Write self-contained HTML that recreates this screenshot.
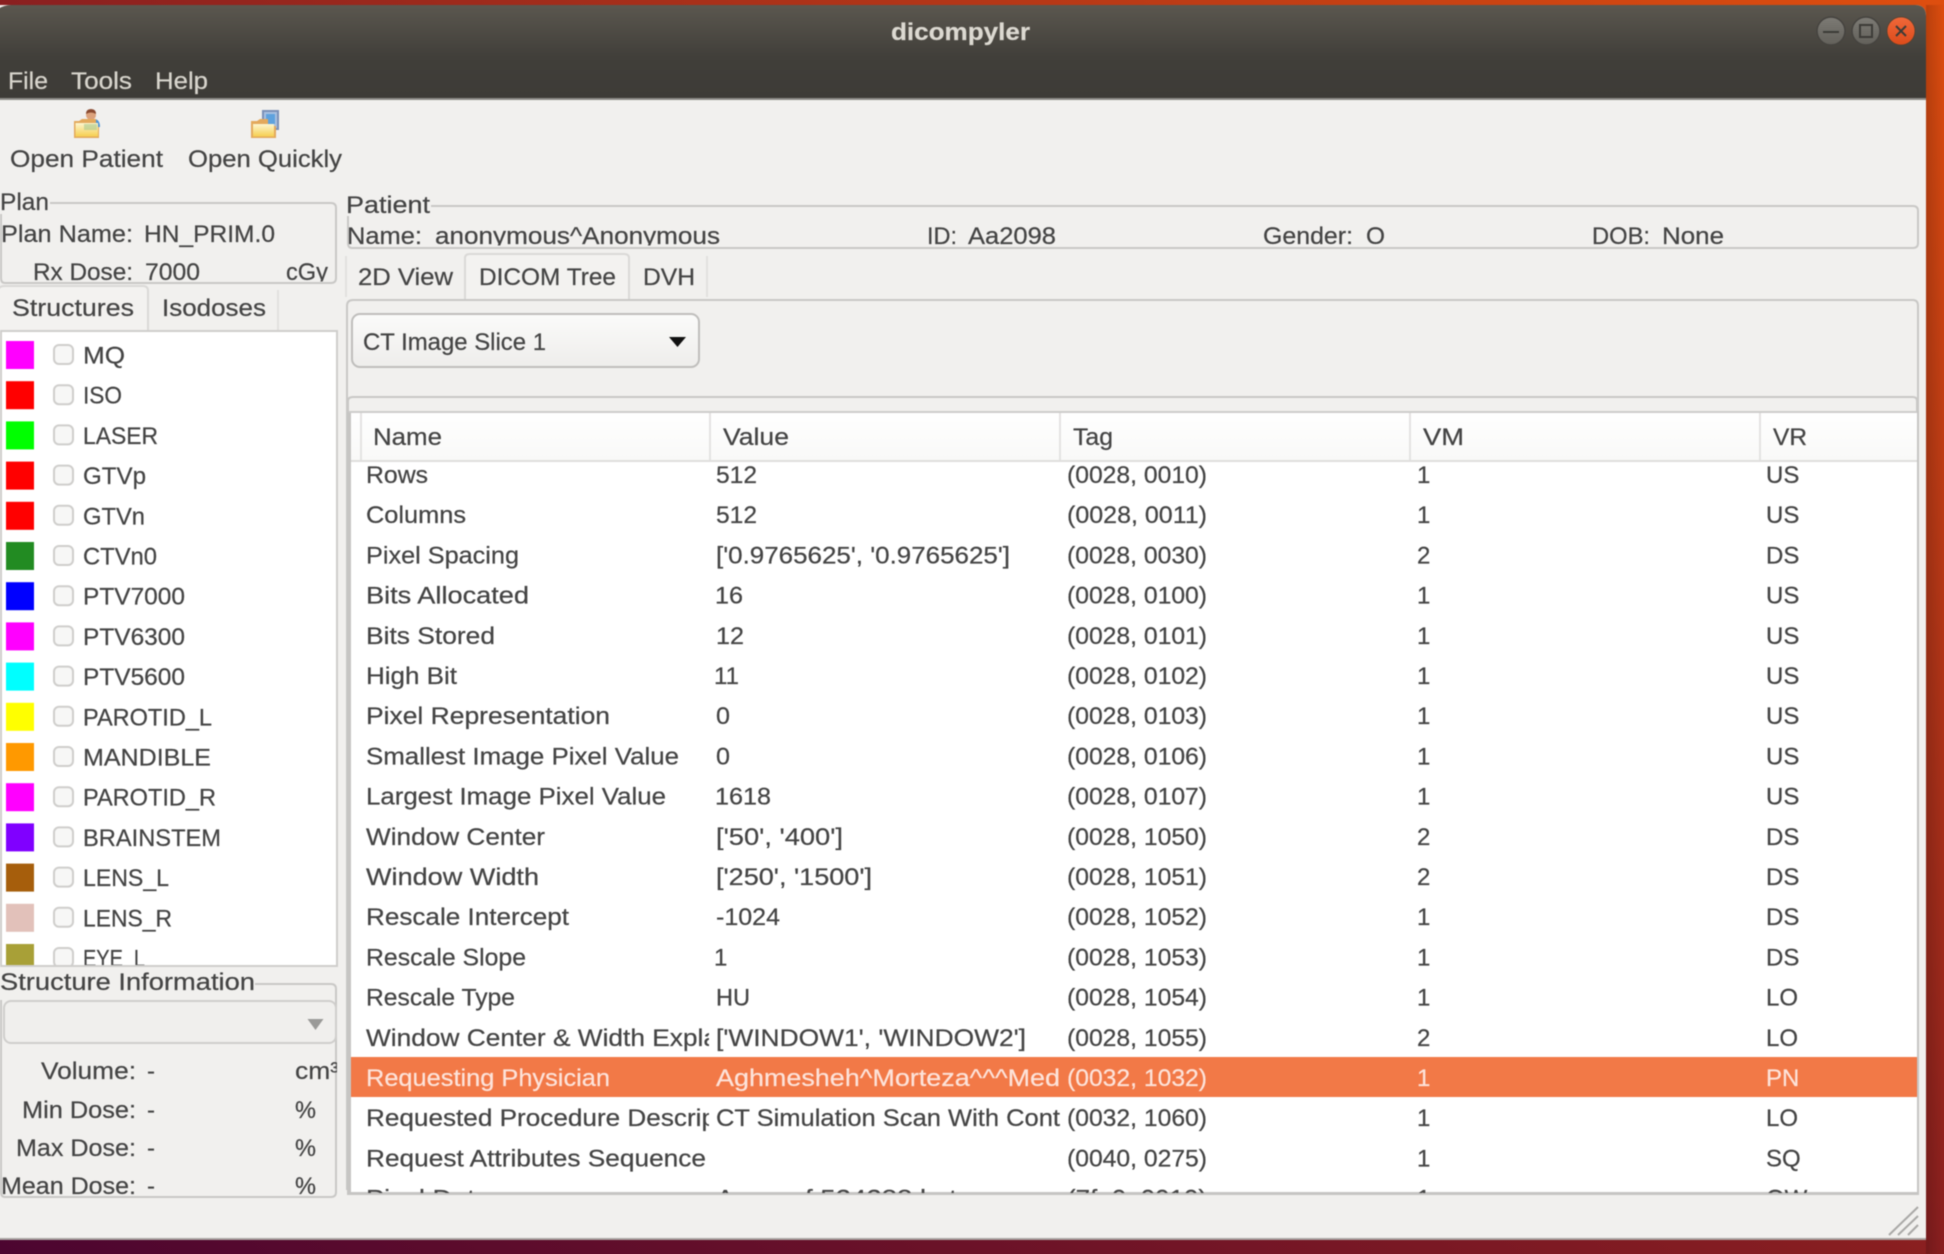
<!DOCTYPE html>
<html>
<head>
<meta charset="utf-8">
<title>dicompyler</title>
<style>
html,body{margin:0;padding:0;width:1944px;height:1254px;overflow:hidden;background:#8a1f20;}
#w{position:absolute;left:0;top:0;width:1944px;height:1254px;overflow:hidden;background:linear-gradient(to top right,#4c0530 0%,#8a1f20 50%,#de4e0f 100%);}
svg{position:absolute;left:-10px;top:-10px;filter:blur(.55px);}
text{font-family:"Liberation Sans",sans-serif;font-size:24px;color:#444;fill:currentColor;stroke:currentColor;stroke-width:.22;}
.m{color:#d8d5cd;}
.s{color:#fde3da;}
.ln{fill:none;stroke:#c9c8c6;stroke-width:2;}
.cb{fill:#f7f7f6;stroke:#cfcecc;stroke-width:2;}
</style>
</head>
<body>
<div id="w">
<svg width="1964" height="1274" viewBox="-10 -10 1964 1274" xmlns="http://www.w3.org/2000/svg">
<defs>
<linearGradient id="tb" x1="0" y1="0" x2="0" y2="1"><stop offset="0" stop-color="#5b574f"/><stop offset=".55" stop-color="#413f3a"/><stop offset="1" stop-color="#3d3b37"/></linearGradient>
<linearGradient id="bt" x1="0" y1="0" x2="0" y2="1"><stop offset="0" stop-color="#fbfbfa"/><stop offset="1" stop-color="#eeedeb"/></linearGradient>
<linearGradient id="hd" x1="0" y1="0" x2="0" y2="1"><stop offset="0" stop-color="#fff"/><stop offset="1" stop-color="#f9f9f8"/></linearGradient>
<linearGradient id="wb" x1="0" y1="0" x2="0" y2="1"><stop offset="0" stop-color="#7d7b75"/><stop offset="1" stop-color="#62605a"/></linearGradient>
<linearGradient id="cl" x1="0" y1="0" x2="0" y2="1"><stop offset="0" stop-color="#f0683a"/><stop offset="1" stop-color="#dc4b1a"/></linearGradient>
<linearGradient id="fd" x1="0" y1="0" x2="0" y2="1"><stop offset="0" stop-color="#fdf6d0"/><stop offset="1" stop-color="#f6cf50"/></linearGradient>
<linearGradient id="shr" x1="0" y1="0" x2="1" y2="0"><stop offset="0" stop-color="#000" stop-opacity=".16"/><stop offset="1" stop-color="#000" stop-opacity="0"/></linearGradient>
<clipPath id="cPlan"><rect x="-10" y="200" width="347" height="81.500"/></clipPath>
<clipPath id="cPat"><rect x="340" y="200" width="1580" height="45.500"/></clipPath>
<clipPath id="cList"><rect x="-10" y="332" width="347" height="633"/></clipPath>
<clipPath id="cInfo"><rect x="-10" y="1046" width="347" height="151"/></clipPath>
<clipPath id="cName"><rect x="351" y="462" width="358" height="731"/></clipPath>
<clipPath id="cVal"><rect x="711" y="462" width="349" height="731"/></clipPath>
<clipPath id="cRest"><rect x="1060" y="462" width="857" height="731"/></clipPath>
</defs>

<!-- window shadow on desktop -->
<rect x="1926" y="5" width="18" height="1249" fill="url(#shr)"/>

<!-- window -->
<path d="M-10 16V5H-10Q0 5 11 5H1915Q1926 5 1926 16V1239H-10Z" fill="#f1f0ee"/>
<path d="M-10 99V16Q0 5 11 5H1915Q1926 5 1926 16V99Z" fill="url(#tb)"/>
<rect x="-10" y="98" width="1936" height="2" fill="#8d8c88"/>
<rect x="-10" y="1238" width="1936" height="2" fill="#a9a5a2"/>

<text x="891" y="40" textLength="139" lengthAdjust="spacingAndGlyphs" style="color:#dcd9d1;font-weight:bold">dicompyler</text>
<circle cx="1831" cy="31" r="14" fill="url(#wb)" stroke="#45433f" stroke-width="1.5"/>
<path d="M1823 32H1839" stroke="#3c3b37" stroke-width="2"/>
<circle cx="1866" cy="31" r="14" fill="url(#wb)" stroke="#45433f" stroke-width="1.5"/>
<rect x="1860" y="25" width="12" height="12" fill="none" stroke="#3c3b37" stroke-width="2"/>
<circle cx="1901" cy="31" r="14" fill="url(#cl)" stroke="#55402f" stroke-width=".8"/>
<path d="M1896 26L1906 36M1906 26L1896 36" stroke="#3c3b37" stroke-width="2"/>

<text class="m" x="8" y="89" textLength="40" lengthAdjust="spacingAndGlyphs">File</text>
<text class="m" x="71" y="89" textLength="61" lengthAdjust="spacingAndGlyphs">Tools</text>
<text class="m" x="155" y="89" textLength="53" lengthAdjust="spacingAndGlyphs">Help</text>

<!-- toolbar icons -->
<g>
<circle cx="91" cy="115" r="5" fill="#dca27c"/><path d="M86 114Q86 109 91 109Q96 109 96 114Q91 111 86 114Z" fill="#8a4a30"/>
<path d="M80 127Q81 120 87 119H95Q100 120 100 127Z" fill="#4f93d6"/>
<path d="M74 121H79L82 119H96V127H99V138H74Z" fill="#e3a95c"/>
<rect x="75.500" y="123" width="22.500" height="13.500" fill="url(#fd)"/>
<rect x="84" y="124" width="13" height="6" fill="#a8c890" opacity=".6"/>
<rect x="263" y="111" width="15" height="18" fill="#a8c0e0" stroke="#7a90b8" stroke-width="2"/>
<rect x="266" y="114" width="9" height="10" fill="#5ea2de"/>
<path d="M251 121H257L260 119H268V126H276V138H251Z" fill="#e3a95c"/>
<rect x="253" y="124" width="21" height="12.500" fill="url(#fd)"/>
</g>
<text x="10" y="167" textLength="153" lengthAdjust="spacingAndGlyphs">Open Patient</text>
<text x="188" y="167" textLength="154" lengthAdjust="spacingAndGlyphs">Open Quickly</text>

<!-- plan frame -->
<path class="ln" d="M50 203H331Q336 203 336 208V278Q336 283 331 283H5Q1 283 1 278V214"/>
<text x="0" y="210" textLength="49" lengthAdjust="spacingAndGlyphs">Plan</text>
<g clip-path="url(#cPlan)">
<text x="1" y="242" textLength="132" lengthAdjust="spacingAndGlyphs">Plan Name:</text>
<text x="144" y="242" textLength="131" lengthAdjust="spacingAndGlyphs">HN_PRIM.0</text>
<text x="33" y="280" textLength="100" lengthAdjust="spacingAndGlyphs">Rx Dose:</text>
<text x="145" y="280" textLength="55" lengthAdjust="spacingAndGlyphs">7000</text>
<text x="286" y="280" textLength="42" lengthAdjust="spacingAndGlyphs">cGy</text>
</g>

<!-- structure tabs -->
<path d="M-2 331V291Q-2 286 5 286H143Q148 286 148 291V331" fill="#f3f2f0" stroke="#dad9d7" stroke-width="2"/>
<path d="M278 290V330" stroke="#e2e1df" stroke-width="2"/>
<text x="12" y="316" textLength="122" lengthAdjust="spacingAndGlyphs">Structures</text>
<text x="162" y="316" textLength="104" lengthAdjust="spacingAndGlyphs">Isodoses</text>

<!-- structure list -->
<rect x="1" y="331" width="336" height="635" fill="#fff" stroke="#cfcecc" stroke-width="2"/>
<g clip-path="url(#cList)">
<rect x="6" y="341" width="28" height="28" fill="#ff00ff"/>
<rect x="6" y="381.200" width="28" height="28" fill="#ff0000"/>
<rect x="6" y="421.400" width="28" height="28" fill="#00ff00"/>
<rect x="6" y="461.600" width="28" height="28" fill="#ff0000"/>
<rect x="6" y="501.800" width="28" height="28" fill="#ff0000"/>
<rect x="6" y="542" width="28" height="28" fill="#228b22"/>
<rect x="6" y="582.200" width="28" height="28" fill="#0000ff"/>
<rect x="6" y="622.400" width="28" height="28" fill="#ff00ff"/>
<rect x="6" y="662.600" width="28" height="28" fill="#00ffff"/>
<rect x="6" y="702.800" width="28" height="28" fill="#ffff00"/>
<rect x="6" y="743" width="28" height="28" fill="#ff9900"/>
<rect x="6" y="783.200" width="28" height="28" fill="#ff00ff"/>
<rect x="6" y="823.400" width="28" height="28" fill="#8000ff"/>
<rect x="6" y="863.600" width="28" height="28" fill="#a65e0c"/>
<rect x="6" y="903.800" width="28" height="28" fill="#e2c1ba"/>
<rect x="6" y="944" width="28" height="28" fill="#a8a037"/>

<rect class="cb" x="54" y="345" width="19" height="19" rx="5"/>
<rect class="cb" x="54" y="385.200" width="19" height="19" rx="5"/>
<rect class="cb" x="54" y="425.400" width="19" height="19" rx="5"/>
<rect class="cb" x="54" y="465.600" width="19" height="19" rx="5"/>
<rect class="cb" x="54" y="505.800" width="19" height="19" rx="5"/>
<rect class="cb" x="54" y="546" width="19" height="19" rx="5"/>
<rect class="cb" x="54" y="586.200" width="19" height="19" rx="5"/>
<rect class="cb" x="54" y="626.400" width="19" height="19" rx="5"/>
<rect class="cb" x="54" y="666.600" width="19" height="19" rx="5"/>
<rect class="cb" x="54" y="706.800" width="19" height="19" rx="5"/>
<rect class="cb" x="54" y="747" width="19" height="19" rx="5"/>
<rect class="cb" x="54" y="787.200" width="19" height="19" rx="5"/>
<rect class="cb" x="54" y="827.400" width="19" height="19" rx="5"/>
<rect class="cb" x="54" y="867.600" width="19" height="19" rx="5"/>
<rect class="cb" x="54" y="907.800" width="19" height="19" rx="5"/>
<rect class="cb" x="54" y="948" width="19" height="19" rx="5"/>

<text x="83" y="363.500" textLength="42" lengthAdjust="spacingAndGlyphs">MQ</text>
<text x="83" y="403.700" textLength="39" lengthAdjust="spacingAndGlyphs">ISO</text>
<text x="83" y="443.900" textLength="75" lengthAdjust="spacingAndGlyphs">LASER</text>
<text x="83" y="484.100" textLength="63" lengthAdjust="spacingAndGlyphs">GTVp</text>
<text x="83" y="524.300" textLength="62" lengthAdjust="spacingAndGlyphs">GTVn</text>
<text x="83" y="564.500" textLength="74" lengthAdjust="spacingAndGlyphs">CTVn0</text>
<text x="83" y="604.700" textLength="102" lengthAdjust="spacingAndGlyphs">PTV7000</text>
<text x="83" y="644.900" textLength="102" lengthAdjust="spacingAndGlyphs">PTV6300</text>
<text x="83" y="685.100" textLength="102" lengthAdjust="spacingAndGlyphs">PTV5600</text>
<text x="83" y="725.300" textLength="129" lengthAdjust="spacingAndGlyphs">PAROTID_L</text>
<text x="83" y="765.500" textLength="128" lengthAdjust="spacingAndGlyphs">MANDIBLE</text>
<text x="83" y="805.700" textLength="133" lengthAdjust="spacingAndGlyphs">PAROTID_R</text>
<text x="83" y="845.900" textLength="138" lengthAdjust="spacingAndGlyphs">BRAINSTEM</text>
<text x="83" y="886.100" textLength="86" lengthAdjust="spacingAndGlyphs">LENS_L</text>
<text x="83" y="926.300" textLength="89" lengthAdjust="spacingAndGlyphs">LENS_R</text>
<text x="83" y="966.500" textLength="62" lengthAdjust="spacingAndGlyphs">EYE_L</text>
</g>

<!-- structure information -->
<path class="ln" d="M255 984H331Q336 984 336 989V1192Q336 1197 331 1197H5Q1 1197 1 1192V1000"/>
<text x="0" y="990" textLength="255" lengthAdjust="spacingAndGlyphs">Structure Information</text>
<rect x="4" y="1001" width="332" height="42" rx="7" fill="#f0efed" stroke="#cfcecc" stroke-width="2"/>
<path d="M307.500 1019H323.500L315.500 1030Z" fill="#9a9a98"/>
<g clip-path="url(#cInfo)">
<text x="41" y="1079" textLength="95" lengthAdjust="spacingAndGlyphs">Volume:</text>
<text x="147" y="1079">-</text>
<text x="295" y="1079" textLength="44" lengthAdjust="spacingAndGlyphs">cm³</text>
<text x="22" y="1118" textLength="114" lengthAdjust="spacingAndGlyphs">Min Dose:</text>
<text x="147" y="1118">-</text>
<text x="295" y="1118" textLength="21" lengthAdjust="spacingAndGlyphs">%</text>
<text x="16" y="1156" textLength="120" lengthAdjust="spacingAndGlyphs">Max Dose:</text>
<text x="147" y="1156">-</text>
<text x="295" y="1156" textLength="21" lengthAdjust="spacingAndGlyphs">%</text>
<text x="1" y="1194" textLength="135" lengthAdjust="spacingAndGlyphs">Mean Dose:</text>
<text x="147" y="1194">-</text>
<text x="295" y="1194" textLength="21" lengthAdjust="spacingAndGlyphs">%</text>
</g>

<!-- patient frame -->
<path class="ln" d="M431 206H1913Q1918 206 1918 211V243Q1918 248 1913 248H352Q348 248 348 243V216"/>
<text x="346" y="213" textLength="84" lengthAdjust="spacingAndGlyphs">Patient</text>
<g clip-path="url(#cPat)">
<text x="347" y="244" textLength="75" lengthAdjust="spacingAndGlyphs">Name:</text>
<text x="435" y="244" textLength="285" lengthAdjust="spacingAndGlyphs">anonymous^Anonymous</text>
<text x="927" y="244" textLength="30" lengthAdjust="spacingAndGlyphs">ID:</text>
<text x="968" y="244" textLength="88" lengthAdjust="spacingAndGlyphs">Aa2098</text>
<text x="1263" y="244" textLength="90" lengthAdjust="spacingAndGlyphs">Gender:</text>
<text x="1366" y="244" textLength="19" lengthAdjust="spacingAndGlyphs">O</text>
<text x="1592" y="244" textLength="58" lengthAdjust="spacingAndGlyphs">DOB:</text>
<text x="1662" y="244" textLength="62" lengthAdjust="spacingAndGlyphs">None</text>
</g>

<!-- main notebook -->
<path class="ln" d="M347 1190V306Q347 300 353 300H1913Q1918 300 1918 306V1194"/>
<path d="M465 299V258Q465 254 470 254H624Q629 254 629 258V299" fill="#f3f2f0" stroke="#dad9d7" stroke-width="2"/>
<path d="M707 256V297M346 256V297" stroke="#e2e1df" stroke-width="2"/>
<text x="358" y="285" textLength="95" lengthAdjust="spacingAndGlyphs">2D View</text>
<text x="479" y="285" textLength="137" lengthAdjust="spacingAndGlyphs">DICOM Tree</text>
<text x="643" y="285" textLength="52" lengthAdjust="spacingAndGlyphs">DVH</text>

<rect x="352" y="314" width="347" height="53" rx="8" fill="url(#bt)" stroke="#bfbebc" stroke-width="2"/>
<text x="363" y="350" textLength="183" lengthAdjust="spacingAndGlyphs">CT Image Slice 1</text>
<path d="M669 337H686L677.500 347Z" fill="#111"/>

<!-- table -->
<path d="M348 1194V401Q348 397 353 397H1913Q1917 397 1917 401V1194Z" fill="#f1f0ee" stroke="#c9c8c6" stroke-width="2"/>
<rect x="347" y="412" width="4" height="782" fill="#c6c5c3"/>
<rect x="351" y="412" width="1566" height="781" fill="#fff"/>
<rect x="351" y="412" width="1566" height="49" fill="url(#hd)"/>
<rect x="349" y="411" width="1569" height="2" fill="#cdcccb"/>
<rect x="351" y="460" width="1566" height="2" fill="#dfdedd"/>
<path d="M361 413V460M710 413V460M1060 413V460M1410 413V460M1760 413V460" stroke="#e4e3e2" stroke-width="2"/>
<rect x="347" y="1192" width="1572" height="3" fill="#c6c5c3"/>
<rect x="1917" y="411" width="2" height="784" fill="#c6c5c3"/>
<text x="373" y="445" textLength="69" lengthAdjust="spacingAndGlyphs">Name</text>
<text x="723" y="445" textLength="66" lengthAdjust="spacingAndGlyphs">Value</text>
<text x="1073" y="445" textLength="40" lengthAdjust="spacingAndGlyphs">Tag</text>
<text x="1423" y="445" textLength="41" lengthAdjust="spacingAndGlyphs">VM</text>
<text x="1773" y="445" textLength="34" lengthAdjust="spacingAndGlyphs">VR</text>

<rect x="351" y="1057" width="1566" height="40" fill="#f27947"/>

<g clip-path="url(#cName)">
<text x="366" y="483" textLength="62" lengthAdjust="spacingAndGlyphs">Rows</text>
<text x="366" y="523.200" textLength="100" lengthAdjust="spacingAndGlyphs">Columns</text>
<text x="366" y="563.400" textLength="153" lengthAdjust="spacingAndGlyphs">Pixel Spacing</text>
<text x="366" y="603.600" textLength="163" lengthAdjust="spacingAndGlyphs">Bits Allocated</text>
<text x="366" y="643.800" textLength="129" lengthAdjust="spacingAndGlyphs">Bits Stored</text>
<text x="366" y="684" textLength="91" lengthAdjust="spacingAndGlyphs">High Bit</text>
<text x="366" y="724.200" textLength="244" lengthAdjust="spacingAndGlyphs">Pixel Representation</text>
<text x="366" y="764.400" textLength="313" lengthAdjust="spacingAndGlyphs">Smallest Image Pixel Value</text>
<text x="366" y="804.600" textLength="300" lengthAdjust="spacingAndGlyphs">Largest Image Pixel Value</text>
<text x="366" y="844.800" textLength="179" lengthAdjust="spacingAndGlyphs">Window Center</text>
<text x="366" y="885" textLength="173" lengthAdjust="spacingAndGlyphs">Window Width</text>
<text x="366" y="925.200" textLength="203" lengthAdjust="spacingAndGlyphs">Rescale Intercept</text>
<text x="366" y="965.400" textLength="160" lengthAdjust="spacingAndGlyphs">Rescale Slope</text>
<text x="366" y="1005.600" textLength="149" lengthAdjust="spacingAndGlyphs">Rescale Type</text>
<text x="366" y="1045.800" textLength="352" lengthAdjust="spacingAndGlyphs">Window Center &amp; Width Expla</text>
<text class="s" x="366" y="1086" textLength="244" lengthAdjust="spacingAndGlyphs">Requesting Physician</text>
<text x="366" y="1126.200" textLength="350" lengthAdjust="spacingAndGlyphs">Requested Procedure Descrip</text>
<text x="366" y="1166.400" textLength="340" lengthAdjust="spacingAndGlyphs">Request Attributes Sequence</text>
<text x="366" y="1206.600" textLength="124" lengthAdjust="spacingAndGlyphs">Pixel Data</text>
</g>

<g clip-path="url(#cVal)">
<text x="716" y="483" textLength="41" lengthAdjust="spacingAndGlyphs">512</text>
<text x="716" y="523.200" textLength="41" lengthAdjust="spacingAndGlyphs">512</text>
<text x="716" y="563.400" textLength="294" lengthAdjust="spacingAndGlyphs">['0.9765625', '0.9765625']</text>
<text x="715" y="603.600" textLength="28" lengthAdjust="spacingAndGlyphs">16</text>
<text x="716" y="643.800" textLength="28" lengthAdjust="spacingAndGlyphs">12</text>
<text x="714" y="684">11</text>
<text x="716" y="724.200" textLength="14" lengthAdjust="spacingAndGlyphs">0</text>
<text x="716" y="764.400" textLength="14" lengthAdjust="spacingAndGlyphs">0</text>
<text x="715" y="804.600" textLength="56" lengthAdjust="spacingAndGlyphs">1618</text>
<text x="716" y="844.800" textLength="127" lengthAdjust="spacingAndGlyphs">['50', '400']</text>
<text x="716" y="885" textLength="156" lengthAdjust="spacingAndGlyphs">['250', '1500']</text>
<text x="716" y="925.200" textLength="64" lengthAdjust="spacingAndGlyphs">-1024</text>
<text x="714" y="965.400">1</text>
<text x="716" y="1005.600" textLength="34" lengthAdjust="spacingAndGlyphs">HU</text>
<text x="716" y="1045.800" textLength="310" lengthAdjust="spacingAndGlyphs">['WINDOW1', 'WINDOW2']</text>
<text class="s" x="716" y="1086" textLength="344" lengthAdjust="spacingAndGlyphs">Aghmesheh^Morteza^^^Med</text>
<text x="716" y="1126.200" textLength="344" lengthAdjust="spacingAndGlyphs">CT Simulation Scan With Cont</text>
<text x="716" y="1206.600" textLength="270" lengthAdjust="spacingAndGlyphs">Array of 524288 bytes</text>
</g>

<g clip-path="url(#cRest)">
<text x="1067" y="483" textLength="140" lengthAdjust="spacingAndGlyphs">(0028, 0010)</text>
<text x="1067" y="523.200" textLength="140" lengthAdjust="spacingAndGlyphs">(0028, 0011)</text>
<text x="1067" y="563.400" textLength="140" lengthAdjust="spacingAndGlyphs">(0028, 0030)</text>
<text x="1067" y="603.600" textLength="140" lengthAdjust="spacingAndGlyphs">(0028, 0100)</text>
<text x="1067" y="643.800" textLength="140" lengthAdjust="spacingAndGlyphs">(0028, 0101)</text>
<text x="1067" y="684" textLength="140" lengthAdjust="spacingAndGlyphs">(0028, 0102)</text>
<text x="1067" y="724.200" textLength="140" lengthAdjust="spacingAndGlyphs">(0028, 0103)</text>
<text x="1067" y="764.400" textLength="140" lengthAdjust="spacingAndGlyphs">(0028, 0106)</text>
<text x="1067" y="804.600" textLength="140" lengthAdjust="spacingAndGlyphs">(0028, 0107)</text>
<text x="1067" y="844.800" textLength="140" lengthAdjust="spacingAndGlyphs">(0028, 1050)</text>
<text x="1067" y="885" textLength="140" lengthAdjust="spacingAndGlyphs">(0028, 1051)</text>
<text x="1067" y="925.200" textLength="140" lengthAdjust="spacingAndGlyphs">(0028, 1052)</text>
<text x="1067" y="965.400" textLength="140" lengthAdjust="spacingAndGlyphs">(0028, 1053)</text>
<text x="1067" y="1005.600" textLength="140" lengthAdjust="spacingAndGlyphs">(0028, 1054)</text>
<text x="1067" y="1045.800" textLength="140" lengthAdjust="spacingAndGlyphs">(0028, 1055)</text>
<text class="s" x="1067" y="1086" textLength="140" lengthAdjust="spacingAndGlyphs">(0032, 1032)</text>
<text x="1067" y="1126.200" textLength="140" lengthAdjust="spacingAndGlyphs">(0032, 1060)</text>
<text x="1067" y="1166.400" textLength="140" lengthAdjust="spacingAndGlyphs">(0040, 0275)</text>
<text x="1067" y="1206.600" textLength="140" lengthAdjust="spacingAndGlyphs">(7fe0, 0010)</text>

<text x="1417" y="483">1</text><text x="1766" y="483">US</text>
<text x="1417" y="523.200">1</text><text x="1766" y="523.200">US</text>
<text x="1417" y="563.400">2</text><text x="1766" y="563.400">DS</text>
<text x="1417" y="603.600">1</text><text x="1766" y="603.600">US</text>
<text x="1417" y="643.800">1</text><text x="1766" y="643.800">US</text>
<text x="1417" y="684">1</text><text x="1766" y="684">US</text>
<text x="1417" y="724.200">1</text><text x="1766" y="724.200">US</text>
<text x="1417" y="764.400">1</text><text x="1766" y="764.400">US</text>
<text x="1417" y="804.600">1</text><text x="1766" y="804.600">US</text>
<text x="1417" y="844.800">2</text><text x="1766" y="844.800">DS</text>
<text x="1417" y="885">2</text><text x="1766" y="885">DS</text>
<text x="1417" y="925.200">1</text><text x="1766" y="925.200">DS</text>
<text x="1417" y="965.400">1</text><text x="1766" y="965.400">DS</text>
<text x="1417" y="1005.600">1</text><text x="1766" y="1005.600">LO</text>
<text x="1417" y="1045.800">2</text><text x="1766" y="1045.800">LO</text>
<text class="s" x="1417" y="1086">1</text><text class="s" x="1766" y="1086">PN</text>
<text x="1417" y="1126.200">1</text><text x="1766" y="1126.200">LO</text>
<text x="1417" y="1166.400">1</text><text x="1766" y="1166.400">SQ</text>
<text x="1417" y="1206.600">1</text><text x="1766" y="1206.600">OW</text>
</g>

<!-- resize grip -->
<path d="M1889 1235L1918 1207M1898 1235L1918 1216M1908 1235L1918 1225" stroke="#a9a8a6" stroke-width="2" fill="none"/>
</svg>
</div>
</body>
</html>
